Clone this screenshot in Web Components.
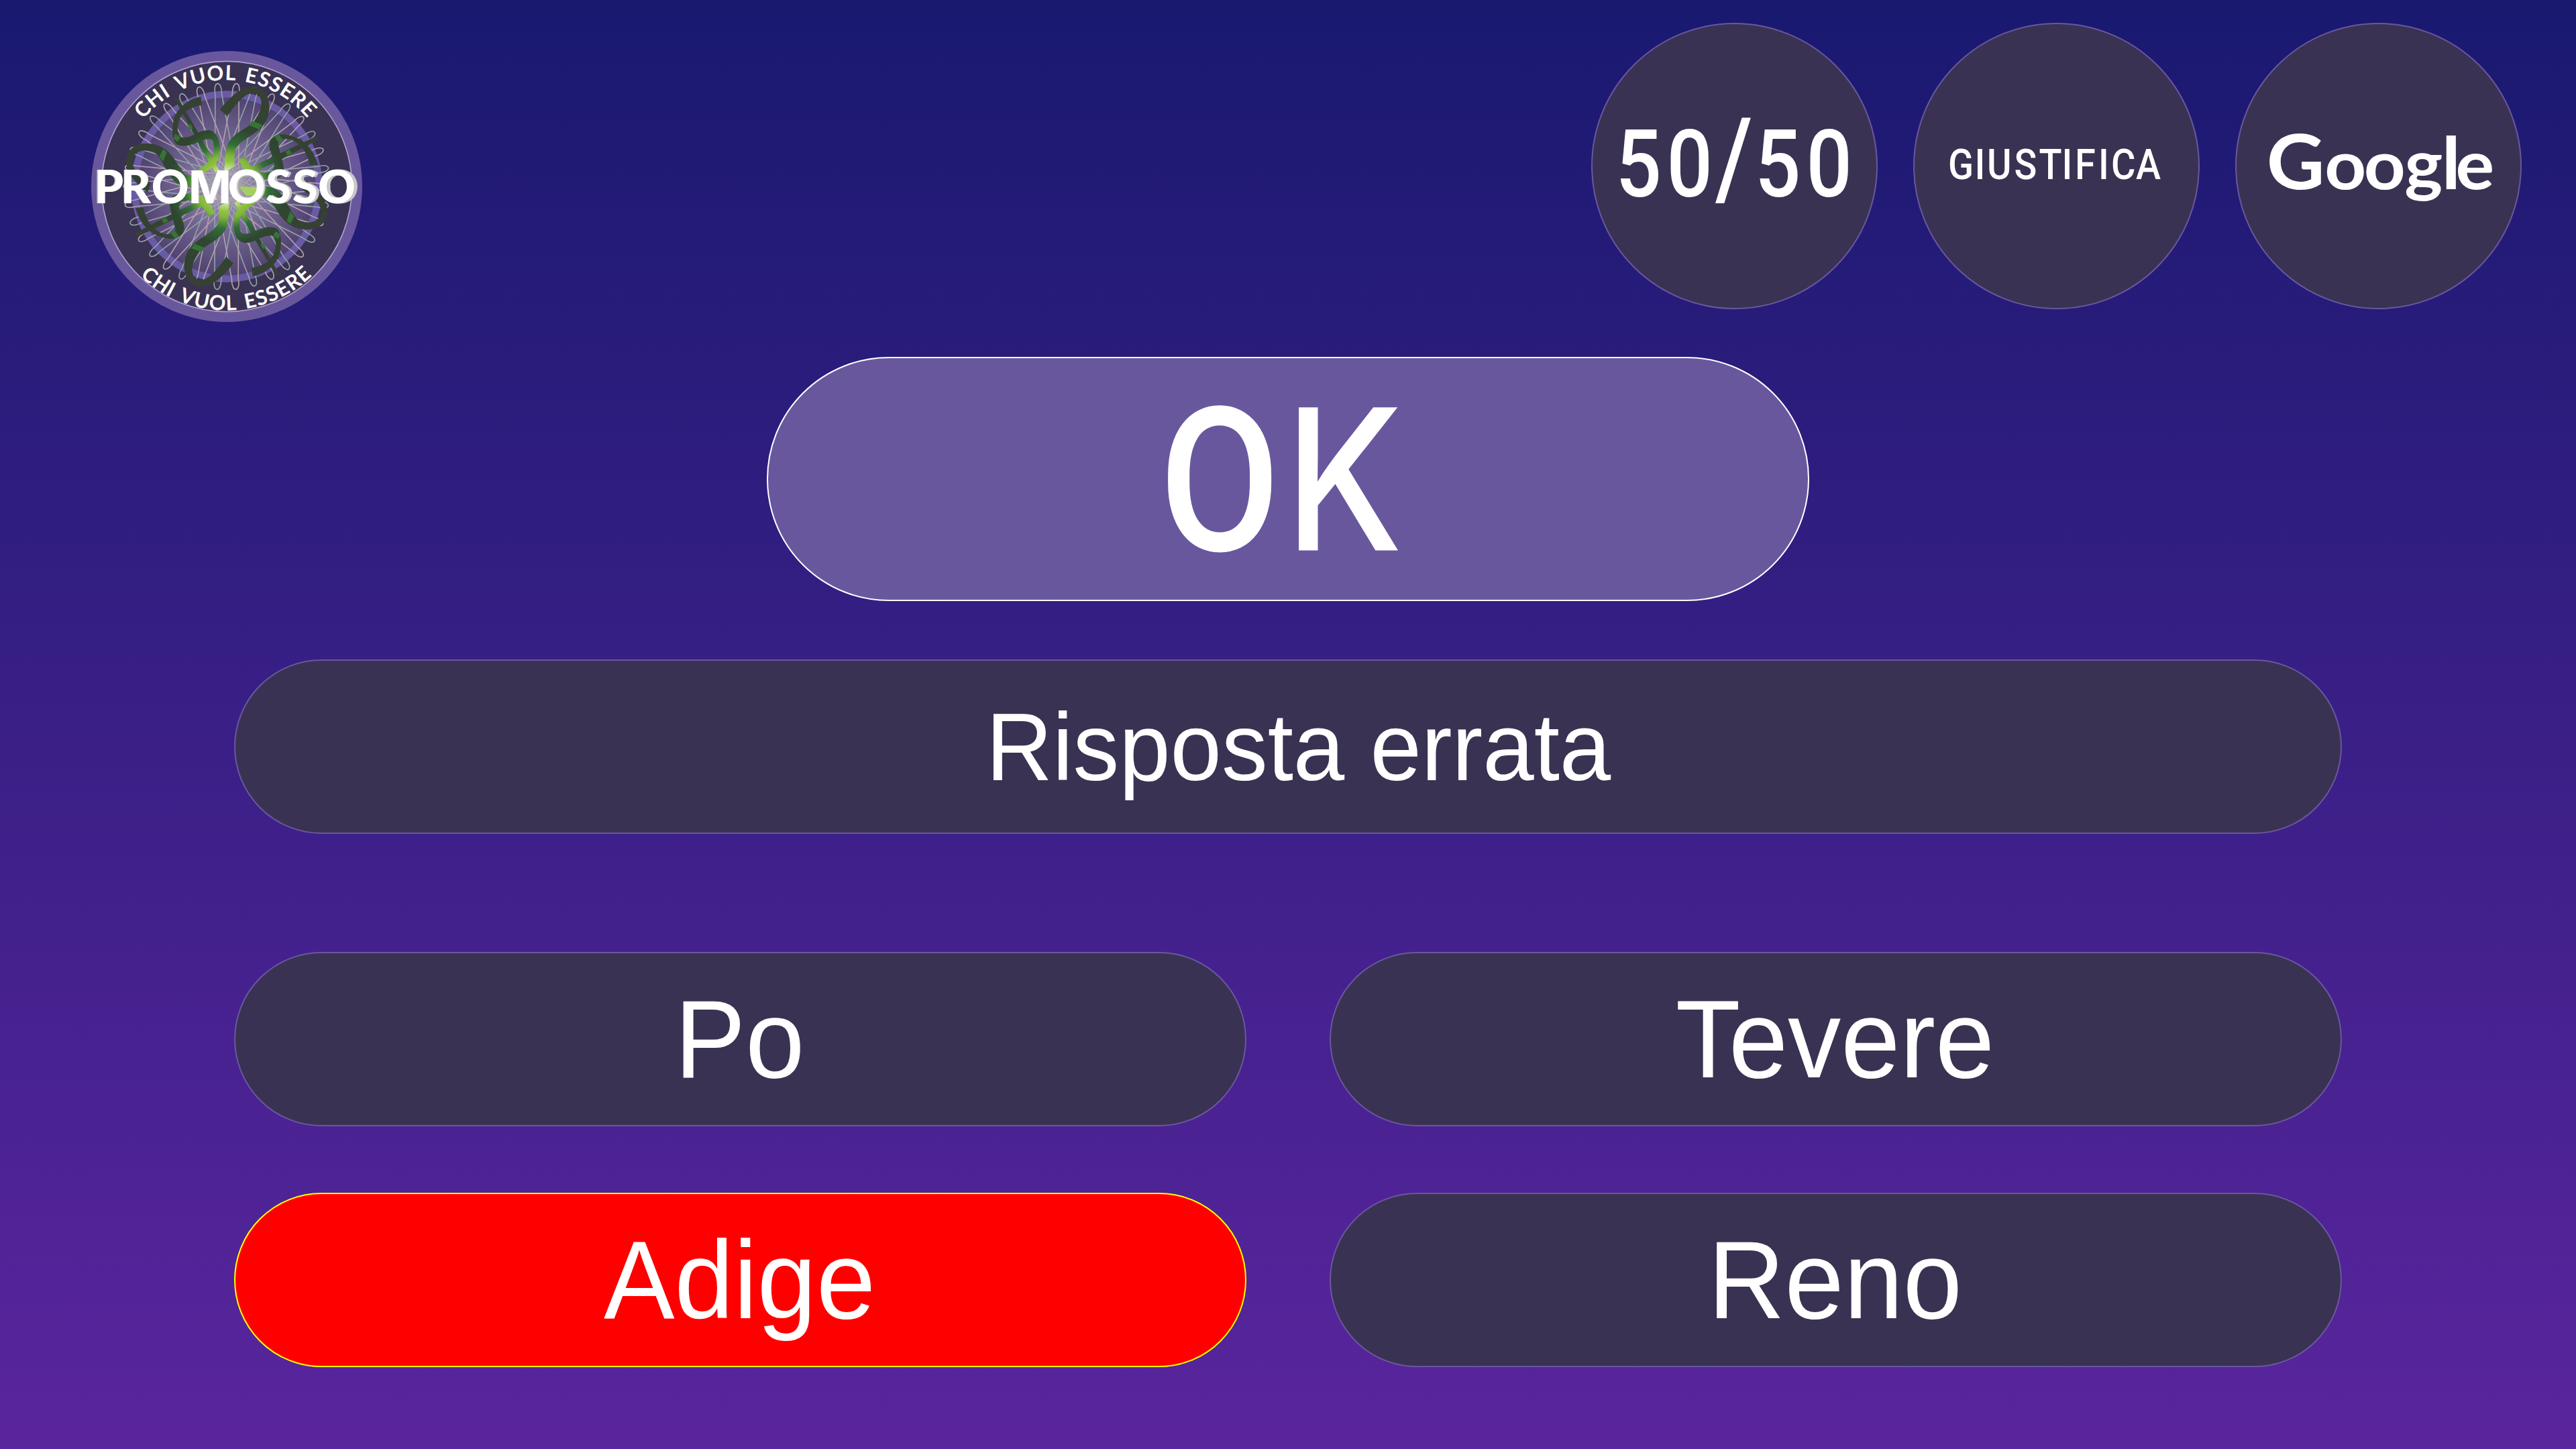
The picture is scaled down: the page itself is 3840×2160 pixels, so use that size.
<!DOCTYPE html>
<html lang="it">
<head>
<meta charset="utf-8">
<title>Chi vuol essere promosso</title>
<style>
html,body{margin:0;height:100%}
body{background:linear-gradient(#191970,#5a259d);overflow:hidden;font-family:"Liberation Sans",Arial,sans-serif;color:#fff}
</style>
</head>
<body>
<quiz-screen></quiz-screen>
<script>
const define=(name,html,setup)=>customElements.define(name,class extends HTMLElement{
  connectedCallback(){
    if(this.shadowRoot)return;
    this.attachShadow({mode:'open'}).innerHTML=html;
    if(setup)setup.call(this,this.shadowRoot);
  }
});

/* Lettering whose glyphs start at given ink positions, condensed by the factor "squeeze".
   "alt" maps a character to a face of its own. */
const placeInk=(text,label,{font,squeeze=1,lefts,baseline,alt={}})=>{
  const ctx=document.createElement('canvas').getContext('2d');
  const xs=[...label].map((c,i)=>{
    ctx.font=alt[c]||font;
    return lefts[i]/squeeze+ctx.measureText(c).actualBoundingBoxLeft;
  });
  text.replaceChildren(...[...label].map(c=>{
    if(!alt[c])return document.createTextNode(c);
    const s=document.createElementNS('http://www.w3.org/2000/svg','tspan');
    s.textContent=c;s.style.font=alt[c];
    return s;
  }));
  text.setAttribute('x',xs.map(v=>v.toFixed(2)).join(' '));
  text.setAttribute('y',baseline);
  text.setAttribute('transform',`scale(${squeeze} 1)`);
  text.style.font=font;
};

define('ink-text',`<style>:host{display:block;width:100%;height:100%}svg{display:block;width:100%;height:100%;overflow:visible}text{fill:#fff}</style><svg><text></text></svg>`,
function(root){
  const a=n=>this.getAttribute(n);
  const alt={};
  for(const part of (a('alt')||'').split(';'))if(part)alt[part[0]]=part.slice(2);
  placeInk(root.querySelector('text'),a('label'),{font:a('face'),squeeze:+a('squeeze')||1,
    lefts:a('lefts').split(' ').map(Number),baseline:a('baseline'),alt});
});

define('life-line',`<style>:host{display:block;box-sizing:border-box;width:427px;height:427px;border:2px solid #69579e;border-radius:50%;background:#3a3252}</style><slot></slot>`);

define('ok-button',`<style>:host{display:block;box-sizing:border-box;width:1554px;height:364px;border:2px solid #fff;border-radius:182px;background:#69579e}</style><slot></slot>`);

define('quiz-pill',`<style>
:host{display:flex;align-items:center;justify-content:center;box-sizing:border-box;height:260px;border:2px solid #69579e;border-radius:130px;background:#3a3252;font-size:158.4px;padding:1px 2px 0 0;line-height:1;white-space:nowrap}
:host([question]){font-size:137.4px;padding:0 0 0 31px}
:host([wrong]){background:#f00;border-color:#ff0}
span{display:block;line-height:normal;transform:scaleY(1.04)}
</style><span><slot></slot></span>`);

define('quiz-logo',`<style>
:host{display:block;width:404px;height:404px}
svg{display:block;width:100%;height:100%;overflow:visible}
.arc{font:700 92px Lato,"Open Sans",sans-serif;fill:#fff;word-spacing:14px}
</style>
<svg viewBox="50 48 1212 1212">
<defs>
<radialGradient id="disc" gradientUnits="userSpaceOnUse" cx="656" cy="654" r="400"><stop offset="0" stop-color="#a99bc4"/><stop offset=".55" stop-color="#70628f"/><stop offset="1" stop-color="#504371"/></radialGradient>
<radialGradient id="arm" gradientUnits="userSpaceOnUse" cx="656" cy="654" r="450"><stop offset="0" stop-color="#fff"/><stop offset=".16" stop-color="#d5e8ae"/><stop offset=".25" stop-color="#8fc33d"/><stop offset=".31" stop-color="#7fb53c"/><stop offset=".42" stop-color="#336d39"/><stop offset=".58" stop-color="#2f4630"/><stop offset="1" stop-color="#374034"/></radialGradient>
<path id="up" d="M283 354A475 475 0 0 1 1024 358"/>
<path id="down" d="M268 1055A558 558 0 0 0 1045 1046"/>
<g id="half">
<path d="M420 258L440 262L560 468L622 580L604 592L540 480L485 375Z"/>
<path d="M540 252L545 290C500 296 462 318 446 350C430 395 434 425 455 434C500 440 525 400 578 402C622 412 634 470 620 530C602 570 565 585 535 605L524 580C560 555 600 540 598 490C600 450 590 436 560 444C510 462 470 484 432 466C405 442 410 370 427 332C450 290 490 262 540 252Z"/>
<path d="M626 310C680 240 730 205 775 206C845 212 862 300 833 360C800 420 735 432 700 480C688 500 690 540 690 565L645 590C648 540 645 490 665 455C700 405 750 395 780 360C812 315 830 250 778 237C740 232 700 280 658 340Z"/>
<path d="M318 640L302 680C245 640 205 590 206 530C220 470 270 455 320 463C400 475 425 540 458 585C470 605 490 612 520 600L530 640C490 665 450 655 425 632C380 590 365 515 325 498C285 487 245 495 235 530C230 580 270 605 318 640Z"/>
<path d="M248 750L284 750C295 800 320 845 370 865C410 872 430 860 424 835C415 790 395 750 402 705L430 690C470 680 505 690 530 690C560 700 590 740 602 775L572 790C560 745 520 715 480 716C430 720 440 755 462 815C475 855 455 885 410 888C340 885 270 840 248 750Z"/>
<path d="M244 864L255 880L390 815L612 710L600 690L430 766Z"/>
<g fill="#377336"><path d="M768 360L815 378L800 398L756 380Z"/><path d="M372 487L388 500L372 543L354 520Z"/><path d="M425 418L449 436L436 454L417 440Z"/><path d="M480 380L494 374L505 394L491 402Z"/><path d="M406 864L423 850L442 876L424 887Z"/><path d="M365 802L385 794L394 809L375 820Z"/></g>
</g>
</defs>
<circle cx="656" cy="654" r="606" fill="#69579e"/>
<circle cx="656" cy="654" r="560" fill="#3a3252" stroke="#b2a2cf" stroke-width="5"/>
<circle cx="656" cy="654" r="413" fill="url(#disc)" stroke="#695aa4" stroke-width="31"/>
<g id="web" fill="none" stroke-width="5"></g>
<g fill="url(#arm)"><use href="#half"/><use href="#half" transform="rotate(180 656 654)"/></g>
<path d="M712 654L795 656L785 694L742 695Z" fill="#a5cf62"/>
<text class="arc"><textPath href="#up" textLength="838">CHI VUOL ESSERE</textPath></text>
<text class="arc"><textPath href="#down" textLength="850">CHI VUOL ESSERE</textPath></text>
<text class="word" aria-hidden="true" fill="#c8c8c8"></text>
<text class="word" fill="#fff"></text>
</svg>`,function(root){
  const n=17,R=466,cx=656,cy=654;
  const at=(r,a)=>`${(cx+r*Math.cos(a)).toFixed(1)} ${(cy+r*Math.sin(a)).toFixed(1)}`;
  /* A 17-tipped star of chords; neighbouring chords cross before the rounded loop at each tip. */
  const petals=phase=>{
    const step=8*2*Math.PI/n;let d='';
    for(let k=0;k<n;k++){
      const a=phase+k*step,b=a+step;
      d+=(k?'L':'M')+at(R-50,a+.035)+'L'+at(R-50,b-.035)+'C'+at(R+12,b-.045)+' '+at(R+12,b+.045)+' '+at(R-50,b+.035);
    }
    return d+'Z';
  };
  root.querySelector('#web').innerHTML=`<path stroke="#8fa3a5" d="${petals(-1.66)}"/><path stroke="#b0a0ad" d="${petals(-1.475)}"/>`;
  const lefts=[80,198,325,498,667,833,952,1070];
  const [shade,face]=root.querySelectorAll('.word');
  const font='900 207px Lato',alt={M:'700 204px Inter'};
  placeInk(shade,'PROMOSSO',{font,alt,lefts:lefts.map(x=>x-5+(x-80)*.021),baseline:728});
  placeInk(face,'PROMOSSO',{font,alt,lefts,baseline:728});
});

define('quiz-screen',`<style>
:host{display:flex;flex-direction:column;width:3840px;height:2160px}
header{box-sizing:border-box;height:532px;flex:none;display:flex;justify-content:space-between;align-items:flex-start;padding:34px 81px 0 136px}
quiz-logo{margin-top:42px}
nav{display:flex;gap:53px}
ok-button{align-self:center}
main{display:flex;flex-direction:column;padding:87px 349px 0}
section{display:grid;grid-template-columns:1fr 1fr;gap:99px 124px;margin-top:176px}
</style>
<header>
<quiz-logo></quiz-logo>
<nav>
<life-line><ink-text label="50/50" face="500 140px Roboto" alt="/:500 166px Roboto" squeeze=".86" baseline="257.5" lefts="41.5 116.5 183 249 324.5"></ink-text></life-line>
<life-line><ink-text label="GIUSTIFICA" face="500 63.5px Roboto" squeeze=".88" baseline="231.5" lefts="52.6 94 110.7 150.2 186.5 224 242.6 278.4 295.6 330"></ink-text></life-line>
<life-line><ink-text label="Google" face="700 102px Lato" alt="G:700 113px Lato;l:700 107px Lato" squeeze="1.06" baseline="246" lefts="49 134.5 193 252.5 312 329.6"></ink-text></life-line>
</nav>
</header>
<ok-button><ink-text label="OK" face="500 300px Roboto" alt="K:500 293px Inter" squeeze=".87" baseline="286.5" lefts="595.5 790.5"></ink-text></ok-button>
<main>
<quiz-pill question>Risposta errata</quiz-pill>
<section>
<quiz-pill>Po</quiz-pill><quiz-pill>Tevere</quiz-pill>
<quiz-pill wrong>Adige</quiz-pill><quiz-pill>Reno</quiz-pill>
</section>
</main>`);
</script>
</body>
</html>
